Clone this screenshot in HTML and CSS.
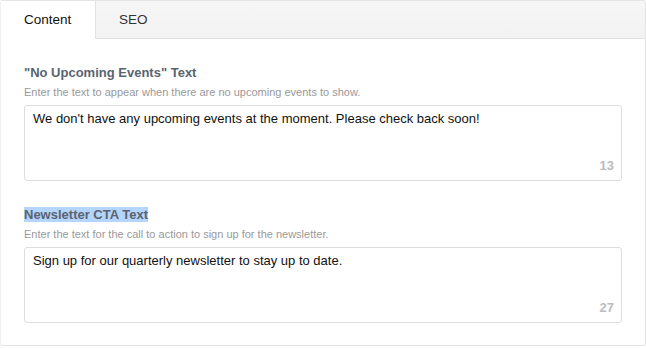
FILE: index.html
```html
<!DOCTYPE html>
<html lang="en">
<head>
  <meta charset="UTF-8">
  <title>Event Settings</title>
  <link rel="stylesheet" href="styles.css">
</head>
<body>
  <div class="panel">
    <div class="tabs">
      <div class="tab active">Content</div>
      <div class="tab">SEO</div>
      <div class="tab-fill"></div>
    </div>

    <div class="panel-body">
      <div class="field">
        <label class="field-label">"No Upcoming Events" Text</label>
        <div class="field-help">Enter the text to appear when there are no upcoming events to show.</div>
        <div class="textbox">
          <div class="textbox-value">We don't have any upcoming events at the moment. Please check back soon!</div>
          <span class="counter">13</span>
        </div>
      </div>

      <div class="field">
        <label class="field-label"><span class="selected">Newsletter CTA Text</span></label>
        <div class="field-help">Enter the text for the call to action to sign up for the newsletter.</div>
        <div class="textbox">
          <div class="textbox-value">Sign up for our quarterly newsletter to stay up to date.</div>
          <span class="counter">27</span>
        </div>
      </div>
    </div>
  </div>
</body>
</html>
```

FILE: styles.css
```css
* {
  box-sizing: border-box;
}
body {
  margin: 0;
  font-family: "Liberation Sans", Arial, sans-serif;
  background-color: #fff;
  color: #222;
}
.panel {
  width: 646px;
  height: 346px;
  border: 1px solid #e4e4e4;
  border-left-color: #f0f0f0;
  border-radius: 3px;
  background-color: #fff;
}
.tabs {
  display: flex;
  height: 38px;
}
.tab {
  padding: 0 24px 0 23px;
  font-size: 13.5px;
  line-height: 37px;
  color: #333;
  background: linear-gradient(#f6f6f6, #f2f2f3);
  border-left: 1px solid #e2e2e4;
  border-bottom: 1px solid #e2e2e4;
}
.tab.active {
  background: #fff;
  color: #111;
  border-left: none;
  border-bottom-color: #fff;
  width: 94px;
}
.tab-fill {
  flex: 1;
  background: linear-gradient(#f6f6f6, #f2f2f3);
  border-bottom: 1px solid #e2e2e4;
}
.panel-body {
  padding: 26px 23px 0 23px;
}
.field {
  margin-bottom: 26px;
}
.field-label {
  display: block;
  font-size: 13px;
  font-weight: bold;
  color: #5b6370;
  line-height: 16px;
}
.selected {
  background-color: #b4d5fd;
}
.field-help {
  font-size: 11px;
  color: #999;
  margin-top: 4px;
  line-height: 14px;
}
.textbox {
  position: relative;
  margin-top: 6px;
  height: 76px;
  border: 1px solid #ddd;
  border-radius: 3px;
  padding: 5px 8px;
}
.textbox-value {
  font-size: 13px;
  line-height: 16px;
  color: #111;
}
.counter {
  position: absolute;
  right: 7px;
  bottom: 7px;
  font-size: 13px;
  font-weight: bold;
  color: #bcbcc0;
}
```
